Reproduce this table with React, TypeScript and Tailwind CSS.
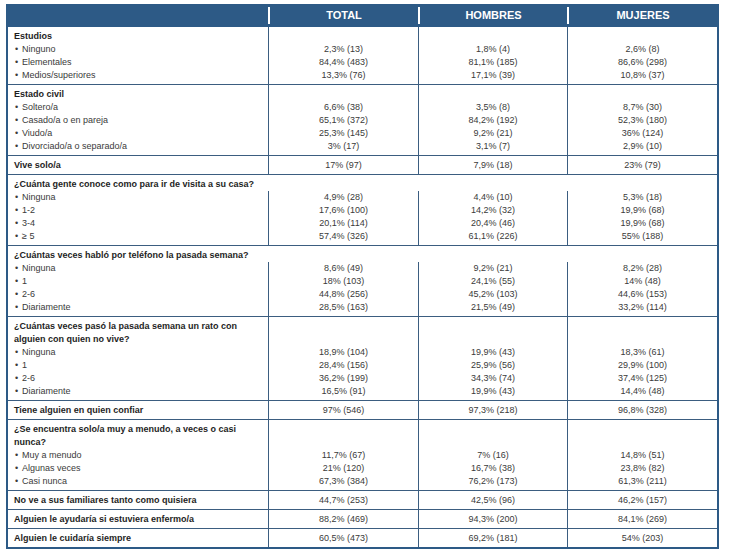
type Item = { label: string; t: string; h: string; m: string };

type Section = {
  title: string[];
  wide?: boolean;
  items?: Item[];
  values?: [string, string, string];
};

const sections: Section[] = [
  {
    title: ['Estudios'],
    items: [
      { label: 'Ninguno', t: '2,3% (13)', h: '1,8% (4)', m: '2,6% (8)' },
      { label: 'Elementales', t: '84,4% (483)', h: '81,1% (185)', m: '86,6% (298)' },
      { label: 'Medios/superiores', t: '13,3% (76)', h: '17,1% (39)', m: '10,8% (37)' },
    ],
  },
  {
    title: ['Estado civil'],
    items: [
      { label: 'Soltero/a', t: '6,6% (38)', h: '3,5% (8)', m: '8,7% (30)' },
      { label: 'Casado/a o en pareja', t: '65,1% (372)', h: '84,2% (192)', m: '52,3% (180)' },
      { label: 'Viudo/a', t: '25,3% (145)', h: '9,2% (21)', m: '36% (124)' },
      { label: 'Divorciado/a o separado/a', t: '3% (17)', h: '3,1% (7)', m: '2,9% (10)' },
    ],
  },
  { title: ['Vive solo/a'], values: ['17% (97)', '7,9% (18)', '23% (79)'] },
  {
    title: ['¿Cuánta gente conoce como para ir de visita a su casa?'],
    wide: true,
    items: [
      { label: 'Ninguna', t: '4,9% (28)', h: '4,4% (10)', m: '5,3% (18)' },
      { label: '1-2', t: '17,6% (100)', h: '14,2% (32)', m: '19,9% (68)' },
      { label: '3-4', t: '20,1% (114)', h: '20,4% (46)', m: '19,9% (68)' },
      { label: '≥ 5', t: '57,4% (326)', h: '61,1% (226)', m: '55% (188)' },
    ],
  },
  {
    title: ['¿Cuántas veces habló por teléfono la pasada semana?'],
    wide: true,
    items: [
      { label: 'Ninguna', t: '8,6% (49)', h: '9,2% (21)', m: '8,2% (28)' },
      { label: '1', t: '18% (103)', h: '24,1% (55)', m: '14% (48)' },
      { label: '2-6', t: '44,8% (256)', h: '45,2% (103)', m: '44,6% (153)' },
      { label: 'Diariamente', t: '28,5% (163)', h: '21,5% (49)', m: '33,2% (114)' },
    ],
  },
  {
    title: ['¿Cuántas veces pasó la pasada semana un rato con', 'alguien con quien no vive?'],
    items: [
      { label: 'Ninguna', t: '18,9% (104)', h: '19,9% (43)', m: '18,3% (61)' },
      { label: '1', t: '28,4% (156)', h: '25,9% (56)', m: '29,9% (100)' },
      { label: '2-6', t: '36,2% (199)', h: '34,3% (74)', m: '37,4% (125)' },
      { label: 'Diariamente', t: '16,5% (91)', h: '19,9% (43)', m: '14,4% (48)' },
    ],
  },
  { title: ['Tiene alguien en quien confiar'], values: ['97% (546)', '97,3% (218)', '96,8% (328)'] },
  {
    title: ['¿Se encuentra solo/a muy a menudo, a veces o casi', 'nunca?'],
    items: [
      { label: 'Muy a menudo', t: '11,7% (67)', h: '7% (16)', m: '14,8% (51)' },
      { label: 'Algunas veces', t: '21% (120)', h: '16,7% (38)', m: '23,8% (82)' },
      { label: 'Casi nunca', t: '67,3% (384)', h: '76,2% (173)', m: '61,3% (211)' },
    ],
  },
  { title: ['No ve a sus familiares tanto como quisiera'], values: ['44,7% (253)', '42,5% (96)', '46,2% (157)'] },
  { title: ['Alguien le ayudaría si estuviera enfermo/a'], values: ['88,2% (469)', '94,3% (200)', '84,1% (269)'] },
  { title: ['Alguien le cuidaría siempre'], values: ['60,5% (473)', '69,2% (181)', '54% (203)'] },
];

const cols = 'grid grid-cols-[260px_150px_149px_150px]';
const valueCell = 'border-l border-[#3b5d80] text-center text-[#3a3a3a]';

function SectionRows({ s, first }: { s: Section; first: boolean }) {
  const top = first ? '' : 'border-t border-[#3b5d80]';

  if (s.values) {
    return (
      <div className={`${cols} ${top}`}>
        <div className="pl-[6px] pt-[3px] pb-[2px] font-bold text-[#1e1e1e]">{s.title[0]}</div>
        {s.values.map((v, i) => (
          <div key={i} className={`${valueCell} pt-[3px] pb-[2px]`}>
            {v}
          </div>
        ))}
      </div>
    );
  }

  const items = s.items ?? [];
  const blanks = s.wide ? [] : s.title;
  const pad = s.wide ? 'pb-[2px]' : 'pt-[3px] pb-[2px]';

  return (
    <div className={top}>
      {s.wide && (
        <div className="pl-[6px] pt-[3px] font-bold text-[#1e1e1e] whitespace-nowrap">{s.title[0]}</div>
      )}
      <div className={cols}>
        <div className={`pl-[6px] ${pad}`}>
          {blanks.map((t) => (
            <div key={t} className="font-bold text-[#1e1e1e] whitespace-nowrap">
              {t}
            </div>
          ))}
          {items.map((it) => (
            <div key={it.label} className="flex text-[#3a3a3a]">
              <span className="w-[8px] pl-[1px]">•</span>
              <span>{it.label}</span>
            </div>
          ))}
        </div>
        {(['t', 'h', 'm'] as const).map((k) => (
          <div key={k} className={`${valueCell} ${pad}`}>
            {blanks.map((t) => (
              <div key={t} className="h-[13px]" />
            ))}
            {items.map((it) => (
              <div key={it.label}>{it[k]}</div>
            ))}
          </div>
        ))}
      </div>
    </div>
  );
}

export default function App() {
  return (
    <div className="min-h-screen bg-white font-['Liberation_Sans',Arial,sans-serif]">
      <div className="ml-[6px] pt-[4px]">
        <div className="w-[713px] border-2 border-[#2d5a86] text-[9px] leading-[13px]">
          <div className={`${cols} h-[21px] bg-[#2d5a86]`}>
            <div />
            {['TOTAL', 'HOMBRES', 'MUJERES'].map((h) => (
              <div key={h} className="pt-[1px] pb-[3px]">
                <div className="h-full border-l-2 border-white flex items-center justify-center text-white font-bold text-[11px] leading-none">
                  {h}
                </div>
              </div>
            ))}
          </div>
          {sections.map((s, i) => (
            <SectionRows key={s.title[0]} s={s} first={i === 0} />
          ))}
        </div>
      </div>
    </div>
  );
}
